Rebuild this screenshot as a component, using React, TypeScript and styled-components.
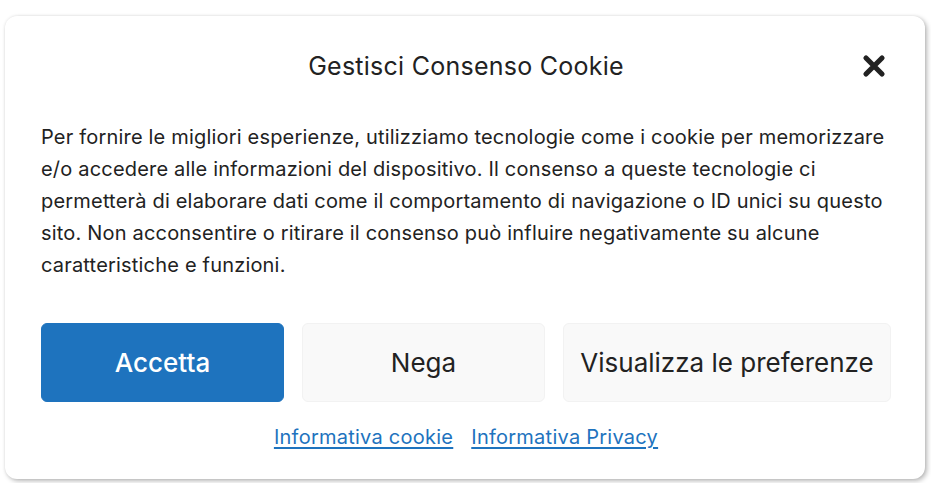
import React from "react";
import styled, { createGlobalStyle } from "styled-components";

const Global = createGlobalStyle`
  html, body { margin: 0; padding: 0; background: #ffffff; }
  body { font-family: Inter, "Noto Sans", sans-serif; }
  * { box-sizing: border-box; }
`;

const Page = styled.div`
  padding: 16px 6px 4px 5px;
`;

const Card = styled.div`
  width: 920px;
  height: 463px;
  background: #ffffff;
  border-radius: 12px;
  box-shadow: 2px 2px 5px rgba(0, 0, 0, 0.28), 0 0 3px rgba(0, 0, 0, 0.08);
  padding: 34px 34px 0 36px;
  display: flex;
  flex-direction: column;
`;

const Header = styled.div`
  display: grid;
  grid-template-columns: 1fr auto 1fr;
  align-items: center;
  height: 32px;
`;

const Title = styled.h1`
  grid-column: 2;
  margin: 0;
  font-size: 25px;
  letter-spacing: 0.25px;
  line-height: 32px;
  font-weight: 400;
  color: #222222;
`;

const Close = styled.button`
  grid-column: 3;
  justify-self: end;
  margin-right: 5px;
  width: 24px;
  height: 24px;
  padding: 0;
  border: 0;
  background: transparent;
  display: flex;
  align-items: center;
  justify-content: center;
  cursor: pointer;
`;

const Message = styled.p`
  margin: 39px 0 0;
  font-size: 20px;
  letter-spacing: 0.19px;
  line-height: 32px;
  color: #222222;
`;

const Buttons = styled.div`
  display: flex;
  gap: 18px;
  margin-top: 42px;
`;

const Btn = styled.button<{ $primary?: boolean; $w: number }>`
  width: ${(p) => p.$w}px;
  height: 79px;
  border-radius: 6px;
  font-family: inherit;
  font-size: 26px;
  font-weight: ${(p) => (p.$primary ? 500 : 400)};
  color: ${(p) => (p.$primary ? "#ffffff" : "#222222")};
  background: ${(p) => (p.$primary ? "#1e73be" : "#f9f9f9")};
  border: 1px solid ${(p) => (p.$primary ? "#1e73be" : "#f2f2f2")};
  cursor: pointer;
`;

const Docs = styled.div`
  display: flex;
  justify-content: center;
  gap: 18px;
  margin-top: 21px;
`;

const DocLink = styled.a`
  font-size: 20px;
  letter-spacing: 0.25px;
  line-height: 28px;
  color: #1e73be;
  text-decoration: underline;
  text-underline-offset: 3px;
`;

const XIcon = () => (
  <svg width="24" height="24" viewBox="0 0 24 24" aria-hidden="true">
    <path
      d="M4 4 L20 20 M20 4 L4 20"
      stroke="#222222"
      strokeWidth="5.2"
      strokeLinecap="round"
    />
  </svg>
);

export default function App() {
  return (
    <Page>
      <Global />
      <Card>
        <Header>
          <Title>Gestisci Consenso Cookie</Title>
          <Close aria-label="Chiudi">
            <XIcon />
          </Close>
        </Header>
        <Message>
          Per fornire le migliori esperienze, utilizziamo tecnologie come i cookie per memorizzare
          <br />
          e/o accedere alle informazioni del dispositivo. Il consenso a queste tecnologie ci
          <br />
          permetterà di elaborare dati come il comportamento di navigazione o ID unici su questo
          <br />
          sito. Non acconsentire o ritirare il consenso può influire negativamente su alcune
          <br />
          caratteristiche e funzioni.
        </Message>
        <Buttons>
          <Btn $primary $w={243}>Accetta</Btn>
          <Btn $w={243}>Nega</Btn>
          <Btn $w={328}>Visualizza le preferenze</Btn>
        </Buttons>
        <Docs>
          <DocLink href="#">Informativa cookie</DocLink>
          <DocLink href="#">Informativa Privacy</DocLink>
        </Docs>
      </Card>
    </Page>
  );
}
